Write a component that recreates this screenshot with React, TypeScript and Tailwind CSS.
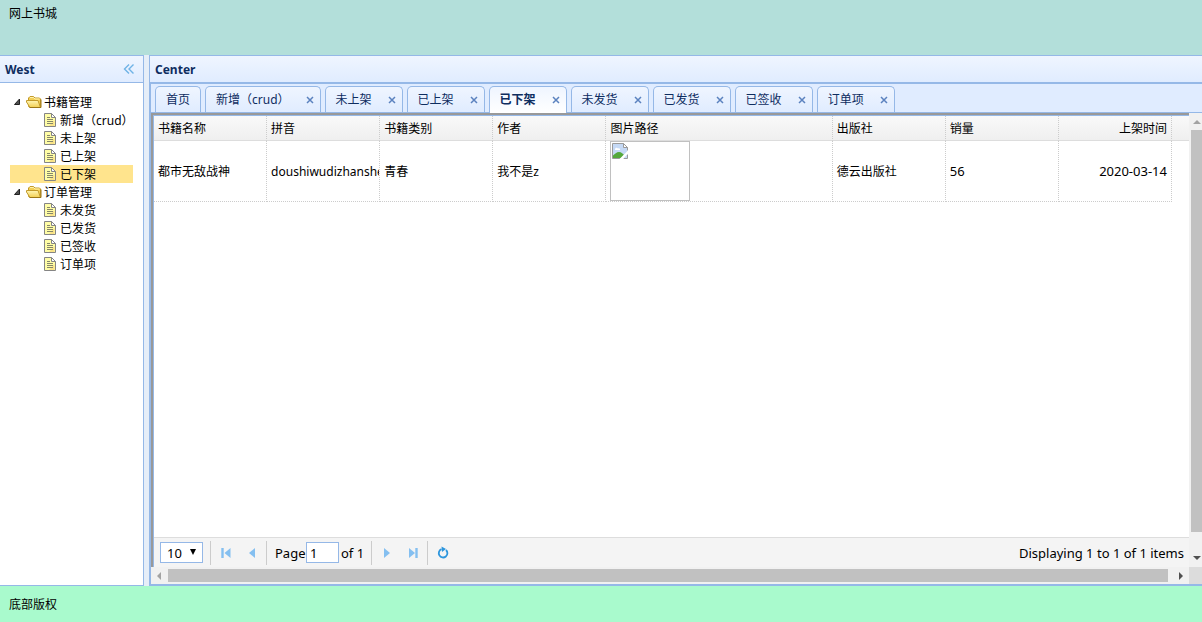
import { useState } from 'react';

const menu = [
  { title: '书籍管理', items: ['新增（crud）', '未上架', '已上架', '已下架'] },
  { title: '订单管理', items: ['未发货', '已发货', '已签收', '订单项'] },
];

const tabs = ['首页', '新增（crud）', '未上架', '已上架', '已下架', '未发货', '已发货', '已签收', '订单项'];

function FolderIcon() {
  return (
    <svg className="size-4 shrink-0" viewBox="0 0 16 16" aria-hidden="true">
      <defs>
        <linearGradient id="folder" x1="0" y1="0" x2="0" y2="1">
          <stop offset="0" stopColor="#fff6b4" />
          <stop offset="1" stopColor="#f2cf52" />
        </linearGradient>
      </defs>
      <path d="M2.500 12.500V4L4 2.500h3.500L9 4h4.500l1 1v8h-11z" fill="#f3cf56" stroke="#c29a2a" strokeLinejoin="round" />
      <path d="M4 3.500h3.500L9 5h4.500" fill="none" stroke="#fff3b0" />
      <path d="M4 13.500L.5 8V6.500h11.500l2.500 7z" fill="url(#folder)" stroke="#c29a2a" strokeLinejoin="round" />
      <path d="M3.500 13.500h11.500V5.500" fill="none" stroke="#9c7716" />
    </svg>
  );
}

function FileIcon() {
  return (
    <svg className="size-4 shrink-0" viewBox="0 0 16 16" aria-hidden="true">
      <path d="M.5 1.500h7l4 4v9H.5z" fill="#fffda6" stroke="#858585" />
      <path d="M10.500 8v6H5z" fill="#f6d67a" opacity="0.7" />
      <path d="M7.500 1.500v4h4z" fill="#fff" stroke="#858585" />
      <path d="M3 5.500h3M3 7.500h6M3 9.500h6M3 11.500h6" stroke="#86866a" />
    </svg>
  );
}

function CaretIcon() {
  return (
    <svg className="h-4 w-4 shrink-0" viewBox="0 0 16 16" aria-hidden="true">
      <path d="M9.500 5v5.500H4.500z" fill="#505050" stroke="#222" strokeLinejoin="round" />
    </svg>
  );
}

function BrokenImage() {
  return (
    <div role="img" className="h-[60px] w-20 border border-[#c0c0c0] p-px">
      <svg className="size-4" viewBox="0 0 16 16" aria-hidden="true">
        <path d="M.5 .5h11l4 4v11H.5z" fill="#c5d9f5" />
        <path d="M3 6.500c0-2 2-2.500 3-1 1.500-.5 2.500.5 2 1.500H3z" fill="#fff" />
        <path d="M1 15v-2.500C3 11 4.500 9 7 9s4 2 5 3l-2.500 3z" fill="#54a83c" />
        <path d="M8.500 15.500H.5V.5h11l4 4v3M15.500 11.500v4h-4" fill="none" stroke="#9a9a9a" />
        <path d="M16 7.500v3L11 16H7.500l4-4z" fill="#fff" />
        <path d="M11.500 .5v4h4z" fill="#fff" stroke="#9a9a9a" />
      </svg>
    </div>
  );
}

const pagerIcons = {
  first: <path d="M4.500 3v10" stroke="#84bff0" strokeWidth="2.400" />,
  last: <path d="M11.500 3v10" stroke="#84bff0" strokeWidth="2.400" />,
};

function PagerButton({ label, dir, edge }: { label: string; dir: 'left' | 'right'; edge?: 'first' | 'last' }) {
  return (
    <button aria-label={label} className="flex h-6 w-[26px] items-center justify-center">
      <svg className="size-4" viewBox="0 0 16 16" aria-hidden="true">
        {edge && pagerIcons[edge]}
        <path
          d={
            dir === 'left'
              ? edge ? 'M12.500 3v10L6.500 8z' : 'M11 3v10L5 8z'
              : edge ? 'M4 3v10l6-5z' : 'M5 3v10l6-5z'
          }
          fill="#84bff0"
        />
      </svg>
    </button>
  );
}

function Separator() {
  return <div className="h-6 w-px bg-[#ccc]" />;
}

export default function App() {
  const [active, setActive] = useState('已下架');

  return (
    <div className="flex h-screen flex-col overflow-hidden bg-[#e6eef8] font-['Noto_Sans','Noto_Sans_CJK_SC',sans-serif] text-[12px] leading-[18px] text-black">
      <header className="h-[55px] shrink-0 bg-[#b3dfda] px-[9px] py-[5px]">网上书城</header>

      <div className="flex min-h-0 flex-1 gap-[5px]">
        {/* West */}
        <aside className="flex w-36 shrink-0 flex-col border border-l-0 border-[#95b8e7] bg-white">
          <div className="flex h-[27px] shrink-0 items-center justify-between border-b border-[#95b8e7] bg-linear-to-b from-[#eff5ff] to-[#e0ecff] pr-1.5 pl-[5px]">
            <h2 className="pt-0.5 font-bold text-[#0e2d5f]">West</h2>
            <button aria-label="Collapse">
              <svg className="size-4" viewBox="0 0 16 16" aria-hidden="true">
                <path d="M8 3.500L3.500 8 8 12.500M12.500 3.500L8 8l4.500 4.500" fill="none" stroke="#6fb3e6" strokeWidth="1.400" />
              </svg>
            </button>
          </div>
          <nav className="p-2.5">
            {menu.map((group) => (
              <div key={group.title}>
                <div className="flex h-[18px] items-center">
                  <CaretIcon />
                  <FolderIcon />
                  <span className="pt-0.5 pl-0.5">{group.title}</span>
                </div>
                <ul>
                  {group.items.map((item) => (
                    <li key={item}>
                      <button
                        onClick={() => setActive(item)}
                        className={`flex h-[18px] w-full items-center pl-[34px] whitespace-nowrap ${active === item ? 'bg-[#ffe48d]' : ''}`}
                      >
                        <FileIcon />
                        <span className="pt-0.5">{item}</span>
                      </button>
                    </li>
                  ))}
                </ul>
              </div>
            ))}
          </nav>
        </aside>

        {/* Center */}
        <main className="flex min-w-0 flex-1 flex-col border-y border-l border-[#95b8e7]">
          <div className="flex h-[27px] shrink-0 items-center border-b border-[#95b8e7] bg-linear-to-b from-[#eff5ff] to-[#e0ecff] pl-[5px]">
            <h2 className="pt-0.5 font-bold text-[#0e2d5f]">Center</h2>
          </div>

          <div className="flex min-h-0 flex-1 flex-col border-y border-l border-[#95b8e7]">
            <div role="tablist" className="flex h-[29px] shrink-0 items-end gap-1 border-b border-[#95b8e7] bg-[#e0ecff] pl-1">
              {tabs.map((tab, idx) => (
                <div
                  key={tab}
                  className={`flex shrink-0 items-center rounded-t-[5px] border border-b-0 border-[#95b8e7] pl-2.5 text-[#0e2d5f] ${
                    idx === 0 ? 'pr-2.5' : 'pr-1'
                  } ${active === tab ? '-mb-px h-[27px] bg-linear-to-b from-[#eff5ff] to-white font-bold' : 'h-[26px] bg-linear-to-b from-[#eff5ff] to-[#e0ecff]'}`}
                >
                  <button role="tab" aria-selected={active === tab} onClick={() => setActive(tab)}>
                    {tab}
                  </button>
                  {idx > 0 && (
                    <button aria-label={`Close ${tab}`} className="ml-3.5 flex size-3 items-center justify-center">
                      <svg className="size-3" viewBox="0 0 12 12" aria-hidden="true">
                        <path d="M3 3l6 6M9 3l-6 6" stroke="#5b82bf" strokeWidth="1.500" />
                      </svg>
                    </button>
                  )}
                </div>
              ))}
            </div>

            <div className="flex min-h-0 flex-1">
              <div className="flex min-w-0 flex-1 flex-col">
                {/* Grid */}
                <div className="flex min-h-0 flex-1 flex-col border-t-2 border-l-2 border-[#999]">
                  <div className="flex min-h-0 flex-1 flex-col border-t border-l border-[#95b8e7] bg-white">
                    <table className="w-full table-fixed border-separate border-spacing-0 text-left">
                      <colgroup>
                        <col span={9} />
                        <col className="w-[17px]" />
                      </colgroup>
                      <thead>
                        <tr className="h-[25px] [&>th]:border-b [&>th]:border-b-[#ddd] [&>th]:bg-linear-to-b [&>th]:from-[#f9f9f9] [&>th]:to-[#efefef] [&>th]:px-1 [&>th]:pt-0.5 [&>th]:pb-0 [&>th]:font-normal [&>th:not(:last-child)]:border-r [&>th:not(:last-child)]:[border-right-color:#ccc] [&>th:not(:last-child)]:[border-right-style:dotted]">
                          <th>书籍名称</th>
                          <th>拼音</th>
                          <th>书籍类别</th>
                          <th>作者</th>
                          <th colSpan={2}>图片路径</th>
                          <th>出版社</th>
                          <th>销量</th>
                          <th className="text-right">上架时间</th>
                          <th></th>
                        </tr>
                      </thead>
                      <tbody>
                        <tr className="h-[61px] [&>td]:overflow-hidden [&>td]:px-1 [&>td]:pb-0 [&>td]:whitespace-nowrap [&>td:not(:last-child)]:border-r [&>td:not(:last-child)]:border-b [&>td:not(:last-child)]:border-dotted [&>td:not(:last-child)]:border-[#ccc]">
                          <td className="pt-0.5">都市无敌战神</td>
                          <td className="pt-0.5">
                            <div className="-mr-1 overflow-hidden">doushiwudizhanshen</div>
                          </td>
                          <td className="pt-0.5">青春</td>
                          <td className="pt-0.5">我不是z</td>
                          <td colSpan={2}>
                            <BrokenImage />
                          </td>
                          <td className="pt-0.5">德云出版社</td>
                          <td className="text-[13px]">56</td>
                          <td className="text-right text-[13px]">2020-03-14</td>
                          <td></td>
                        </tr>
                      </tbody>
                    </table>

                    {/* Pager */}
                    <div className="mt-auto flex h-[30px] shrink-0 items-center border-t border-[#ddd] bg-[#f4f4f4] pr-[5px] pl-1.5 text-[13px]">
                      <div className="relative mr-[7px]">
                        <select
                          aria-label="Page size"
                          defaultValue="10"
                          className="block h-[21px] w-[43px] appearance-none border border-[#95b8e7] bg-white pl-1.5 text-[13px] leading-[18px]"
                        >
                          <option>10</option>
                          <option>20</option>
                          <option>50</option>
                        </select>
                        <svg className="pointer-events-none absolute top-1.5 right-1.5 h-2 w-2" viewBox="0 0 8 8" aria-hidden="true">
                          <path d="M1 1h6L4 7z" fill="#000" />
                        </svg>
                      </div>
                      <Separator />
                      <div className="mr-px ml-0.5 flex">
                        <PagerButton label="First page" dir="left" edge="first" />
                        <PagerButton label="Previous page" dir="left" />
                      </div>
                      <Separator />
                      <label className="ml-2 flex items-center">
                        <span className="w-[31px]">Page</span>
                        <input
                          type="text"
                          defaultValue="1"
                          className="h-[21px] w-[33px] border border-[#95b8e7] bg-white px-[3px] text-[13px]"
                        />
                      </label>
                      <span className="ml-0.5 w-[30px]">of 1</span>
                      <Separator />
                      <div className="mr-px ml-0.5 flex">
                        <PagerButton label="Next page" dir="right" />
                        <PagerButton label="Last page" dir="right" edge="last" />
                      </div>
                      <Separator />
                      <button aria-label="Refresh" className="ml-0.5 flex h-6 w-[26px] items-center justify-center">
                        <svg className="size-4" viewBox="0 0 16 16" aria-hidden="true">
                          <path d="M11 5a4.300 4.300 0 1 1-4.500-.8" fill="none" stroke="#2d96dd" strokeWidth="1.800" />
                          <path d="M6.500 1.500l4.500 2.500-4 3z" fill="#2d96dd" />
                        </svg>
                      </button>
                      <span className="ml-auto whitespace-nowrap">Displaying 1 to 1 of 1 items</span>
                    </div>
                  </div>
                </div>

                {/* Horizontal scrollbar */}
                <div className="flex h-[17px] shrink-0 items-center bg-[#f1f1f1]">
                  <svg className="h-[17px] w-[17px]" viewBox="0 0 17 17" aria-hidden="true">
                    <path d="M10 5v8L6 9z" fill="#a3a3a3" />
                  </svg>
                  <div className="h-[13px] flex-1 bg-[#c1c1c1]" />
                  <svg className="ml-1 h-[17px] w-[17px]" viewBox="0 0 17 17" aria-hidden="true">
                    <path d="M7 5v8l4-4z" fill="#505050" />
                  </svg>
                </div>
              </div>

              {/* Vertical scrollbar */}
              <div className="flex w-[13px] shrink-0 flex-col bg-[#f1f1f1]">
                <svg className="h-[17px] w-[13px] shrink-0" viewBox="0 0 13 17" aria-hidden="true">
                  <path d="M4 11h8L8 7z" fill="#a3a3a3" />
                </svg>
                <div className="ml-0.5 flex-1 bg-[#c1c1c1]" />
                <svg className="mt-[18px] h-[17px] w-[13px] shrink-0" viewBox="0 0 13 17" aria-hidden="true">
                  <path d="M4 6h8l-4 4z" fill="#505050" />
                </svg>
                <div className="h-[17px] shrink-0 bg-[#dcdcdc]" />
              </div>
            </div>
          </div>
        </main>
      </div>

      <footer className="h-9 shrink-0 bg-[#a9facd] px-[9px] py-2.5">底部版权</footer>
    </div>
  );
}
